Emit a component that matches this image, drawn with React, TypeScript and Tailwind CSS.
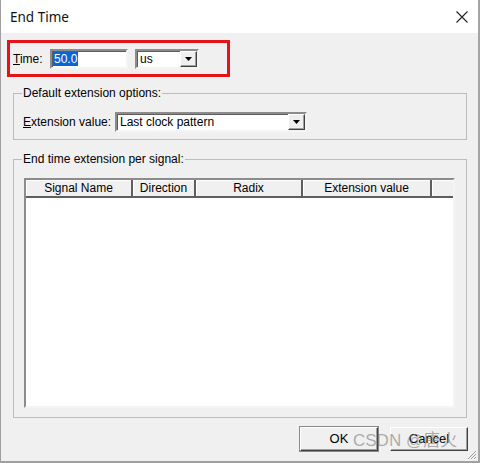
import React from 'react';

// small raised button with the black down-triangle used by the combo boxes
function DropBtn() {
  return (
    <div className="w-[17px] h-[16px] bg-[#efefef] border border-t-[#ffffff] border-l-[#ffffff] border-b-[#404040] border-r-[#404040] shadow-[inset_-1px_-1px_0_#a0a0a0] flex items-center justify-center">
      <svg width="7" height="4" viewBox="0 0 7 4">
        <path d="M0 0h7L3.5 4z" fill="#000" />
      </svg>
    </div>
  );
}

const sunken =
  'border-2 border-t-[#8c8c8c] border-l-[#8c8c8c] border-b-[#f4f4f4] border-r-[#f4f4f4] shadow-[inset_1px_1px_0_#5c5c5c] bg-white';

const headCell =
  'h-full flex items-center justify-center border-r-2 border-b-2 border-[#5e5e5e] bg-[#f0f0f0] shadow-[inset_1px_1px_0_#ffffff]';

export default function App() {
  return (
    <div className="relative w-[480px] h-[463px] flex flex-col bg-[#f0f0f0] text-[12px] leading-[14px] text-black font-['Liberation_Sans',Arial,sans-serif] overflow-hidden border-l border-r-2 border-b-2 border-l-[#a0a0a0] border-r-[#a4a4a4] border-b-[#a0a0a0]">
      {/* title bar */}
      <div className="h-[33px] shrink-0 bg-white flex items-center justify-between pl-[9px] pr-[10px]">
        <span className="font-['Noto_Sans',sans-serif] text-[13.5px] text-[#111]">End Time</span>
        <svg width="12" height="12" viewBox="0 0 12 12">
          <path d="M0.5 0.5L11.5 11.5M11.5 0.5L0.5 11.5" stroke="#222" strokeWidth="1.1" fill="none" />
        </svg>
      </div>

      <div className="flex-1 flex flex-col pl-[6px] pt-[7px]">
        {/* Time row (highlighted) */}
        <div className="w-[223px] h-[37px] border-[3px] border-[#e5121a] flex items-center pl-[3px]">
          <span className="w-[37px]">
            <span className="underline">T</span>ime:
          </span>
          <div className={`w-[78px] h-[20px] flex items-center pl-[1px] ${sunken}`}>
            <span className="bg-[#0a64d8] text-white px-[1px]">50.0</span>
          </div>
          <div className={`ml-[7px] w-[64px] h-[20px] flex items-center justify-between pl-[3px] ${sunken}`}>
            <span>us</span>
            <DropBtn />
          </div>
        </div>

        {/* default extension options */}
        <fieldset className="mt-[9px] ml-[6px] w-[454px] border border-[#bcbcbc] px-[8px] pt-[12px] pb-[7px]">
          <legend className="px-[1px] leading-[14px]">Default extension options:</legend>
          <div className="flex items-center">
            <span className="w-[93px] pl-[1px]">
              <span className="underline">E</span>xtension value:
            </span>
            <div className={`w-[192px] h-[20px] flex items-center justify-between pl-[3px] ${sunken}`}>
              <span>Last clock pattern</span>
              <DropBtn />
            </div>
          </div>
        </fieldset>

        {/* per signal table */}
        <fieldset className="mt-[12px] ml-[6px] w-[454px] border border-[#bcbcbc] px-[8px] pt-[12px] pb-[9px]">
          <legend className="px-[1px] leading-[14px]">End time extension per signal:</legend>
          <div className={`ml-[2px] w-[431px] h-[230px] flex flex-col ${sunken} shadow-none`}>
            <div className="h-[18px] flex">
              <div className={`w-[107px] ${headCell}`}>Signal Name</div>
              <div className={`w-[63px] ${headCell}`}>Direction</div>
              <div className={`w-[107px] ${headCell}`}>Radix</div>
              <div className={`w-[129px] ${headCell}`}>Extension value</div>
              <div className="w-[21px] h-full bg-[#f0f0f0] border-b-2 border-[#5e5e5e] shadow-[inset_1px_1px_0_#ffffff]" />
            </div>
            <div className="flex-1 bg-white" />
          </div>
        </fieldset>

        {/* buttons */}
        <div className="mt-[9px] flex justify-end gap-[12px] pr-[10px] text-[13px]">
          <button className="w-[78px] h-[24px] bg-[#f0f0f0] border border-t-[#ffffff] border-l-[#ffffff] border-b-[#404040] border-r-[#404040] shadow-[inset_-1px_-1px_0_#a0a0a0] outline outline-1 outline-[#8a8a8a]">
            OK
          </button>
          <button className="w-[78px] h-[24px] bg-[#f0f0f0] border border-t-[#ffffff] border-l-[#ffffff] border-b-[#404040] border-r-[#404040] shadow-[inset_-1px_-1px_0_#a0a0a0]">
            Cancel
          </button>
        </div>
      </div>

      {/* size grip */}
      <svg className="absolute right-[1px] bottom-[1px]" width="10" height="10" viewBox="0 0 10 10">
        <path d="M9 1L1 9M9 4L4 9M9 7L7 9" stroke="#a0a0a0" strokeWidth="1" />
      </svg>

      {/* watermark */}
      <div className="absolute left-[352px] top-[431px] text-[17px] leading-[20px] text-[#7a7a7a]/60 font-['Liberation_Sans','Noto_Sans_CJK_SC',sans-serif] pointer-events-none">
        CSDN @唐火
      </div>
    </div>
  );
}
